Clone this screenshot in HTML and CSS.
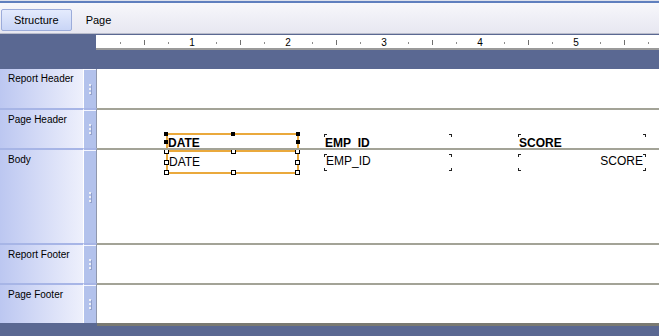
FILE: index.html
```html
<!DOCTYPE html>
<html lang="en">
<head>
    <meta charset="UTF-8">
    <title>Report Designer</title>
    <link rel="stylesheet" href="styles.css">
</head>
<body>
    <div class="topline"></div>

    <div class="tabbar">
        <div class="tab active">Structure</div>
        <div class="tab">Page</div>
    </div>

    <div class="rulerband">
        <div class="ruler">
            <div class="cell"><i class="tick"></i></div>
            <div class="cell"><i class="tick mid"></i></div>
            <div class="cell"><i class="tick"></i></div>
            <div class="cell"><span class="num">1</span></div>
            <div class="cell"><i class="tick"></i></div>
            <div class="cell"><i class="tick mid"></i></div>
            <div class="cell"><i class="tick"></i></div>
            <div class="cell"><span class="num">2</span></div>
            <div class="cell"><i class="tick"></i></div>
            <div class="cell"><i class="tick mid"></i></div>
            <div class="cell"><i class="tick"></i></div>
            <div class="cell"><span class="num">3</span></div>
            <div class="cell"><i class="tick"></i></div>
            <div class="cell"><i class="tick mid"></i></div>
            <div class="cell"><i class="tick"></i></div>
            <div class="cell"><span class="num">4</span></div>
            <div class="cell"><i class="tick"></i></div>
            <div class="cell"><i class="tick mid"></i></div>
            <div class="cell"><i class="tick"></i></div>
            <div class="cell"><span class="num">5</span></div>
            <div class="cell"><i class="tick"></i></div>
            <div class="cell"><i class="tick mid"></i></div>
            <div class="cell"><i class="tick"></i></div>
        </div>
    </div>

    <div class="section first">
        <div class="label">Report Header</div>
        <div class="handle"><span class="grip"></span></div>
        <div class="canvas"></div>
    </div>

    <div class="section">
        <div class="label">Page Header</div>
        <div class="handle"><span class="grip"></span></div>
        <div class="canvas">
            <div class="field selected head-date">
                DATE
                <i class="h solid tl"></i><i class="h solid tm"></i><i class="h solid tr"></i>
                <i class="h solid ml"></i><i class="h solid mr"></i>
            </div>
            <div class="field bracket head-emp">EMP_ID</div>
            <div class="field bracket head-score">SCORE</div>
        </div>
    </div>

    <div class="section body">
        <div class="label">Body</div>
        <div class="handle"><span class="grip"></span></div>
        <div class="canvas">
            <div class="field selected body-date">
                DATE
                <i class="h tl"></i><i class="h tm"></i><i class="h tr"></i>
                <i class="h ml"></i><i class="h mr"></i>
                <i class="h bl"></i><i class="h bm"></i><i class="h br"></i>
            </div>
            <div class="field bracket body-emp">EMP_ID</div>
            <div class="field bracket body-score">SCORE</div>
        </div>
    </div>

    <div class="section">
        <div class="label">Report Footer</div>
        <div class="handle"><span class="grip"></span></div>
        <div class="canvas"></div>
    </div>

    <div class="section">
        <div class="label">Page Footer</div>
        <div class="handle"><span class="grip"></span></div>
        <div class="canvas"></div>
    </div>

    <div class="bottom">
        <div class="bottom-left"></div>
        <div class="bottom-right"></div>
    </div>
</body>
</html>
```

FILE: styles.css
```css
body {
    margin: 0;
    width: 659px;
    height: 336px;
    overflow: hidden;
    font-family: "Liberation Sans", Arial, sans-serif;
    background: #ffffff;
}

/* top toolbar */
.topline {
    height: 2px;
    border-top: 1px solid #dde1ec;
    background: #5f7fbe;
}

.tabbar {
    height: 31px;
    box-sizing: border-box;
    display: flex;
    align-items: flex-end;
    gap: 1px;
    padding: 0 0 2px 1px;
    background: linear-gradient(#f7f7fb, #e7e7f1);
    border-bottom: 1px solid #b9bccb;
}

.tab {
    height: 22px;
    box-sizing: border-box;
    padding: 0 12px;
    font-size: 11px;
    line-height: 21px;
    color: #000;
    border: 1px solid transparent;
}

.tab.active {
    background: linear-gradient(#e4ebfd, #c9d5f6);
    border-color: #9cacda;
    border-radius: 2px;
}

/* ruler */
.rulerband {
    height: 35px;
    box-sizing: border-box;
    padding: 1px 0 0 96px;
    background: #5a6892;
}

.ruler {
    display: flex;
    height: 15px;
    box-sizing: border-box;
    padding: 2px 0 0 12px;
    background: #ffffff;
    border-bottom: 2px solid #9a9a9a;
    overflow: hidden;
}

.cell {
    flex: none;
    width: 24px;
    display: flex;
    justify-content: center;
    align-items: center;
    height: 11px;
}

.tick {
    display: block;
    width: 1px;
    height: 2px;
    background: #8c8c8c;
}

.tick.mid {
    height: 5px;
    background: #707070;
}

.num {
    font-size: 10px;
    line-height: 11px;
    color: #000;
}

/* report sections */
.section {
    display: flex;
    height: 40px;
}

.section.first {
    height: 39px;
}

.section.body {
    height: 95px;
}

.label,
.handle,
.canvas {
    box-sizing: border-box;
    border-top: 2px solid #a7b5e6;
}

.section.first .label,
.section.first .handle,
.section.first .canvas {
    border-top: none;
}

.label {
    width: 83px;
    padding: 4px 0 0 8px;
    font-size: 10px;
    line-height: 12px;
    color: #000;
    background: linear-gradient(to right, #bcc7f1, #eef0fc);
}

.handle {
    width: 14px;
    display: flex;
    align-items: center;
    justify-content: center;
    background: #b3c2ec;
    border-left: 1px solid #ffffff;
    border-right: 1px solid #8f97ad;
    box-shadow: inset 0 1px 0 #f4f6ff;
}

.grip {
    width: 2px;
    height: 10px;
    background: repeating-linear-gradient(to bottom, #eef0f6 0 2px, transparent 2px 4px);
    box-shadow: 1px 1px 0 rgba(90, 100, 140, 0.35);
}

.canvas {
    flex: 1;
    position: relative;
    overflow: hidden;
    background: #ffffff;
    border-top-color: #a3a397;
}

/* report fields */
.field {
    position: absolute;
    box-sizing: border-box;
    font-size: 12px;
    line-height: 14px;
    color: #000;
    white-space: nowrap;
}

.field.bracket {
    width: 128px;
    background:
        linear-gradient(#222, #222) left top / 1px 3px no-repeat,
        linear-gradient(#222, #222) left top / 3px 1px no-repeat,
        linear-gradient(#222, #222) right top / 1px 3px no-repeat,
        linear-gradient(#222, #222) right top / 3px 1px no-repeat,
        linear-gradient(#222, #222) left bottom / 1px 3px no-repeat,
        linear-gradient(#222, #222) left bottom / 3px 1px no-repeat,
        linear-gradient(#222, #222) right bottom / 1px 3px no-repeat,
        linear-gradient(#222, #222) right bottom / 3px 1px no-repeat;
}

.field.selected {
    left: 69px;
    width: 133px;
    border: 2px solid #eaa93c;
}

.head-date,
.head-emp,
.head-score {
    font-weight: bold;
}

.head-date {
    top: 23px;
    height: 22px;
    padding-top: 1px;
}

.head-emp {
    left: 227px;
    top: 24px;
    height: 17px;
    padding: 2px 0 0 1px;
}

.head-score {
    left: 421px;
    top: 24px;
    height: 17px;
    padding: 2px 0 0 1px;
}

.body-date {
    top: 0;
    height: 24px;
    padding: 3px 0 0 1px;
    border-top-width: 3px;
}

.body-emp {
    left: 227px;
    top: 4px;
    height: 17px;
    padding-left: 2px;
}

.body-score {
    left: 421px;
    top: 4px;
    height: 17px;
    padding-right: 3px;
    text-align: right;
}

/* selection handles */
.h {
    position: absolute;
    box-sizing: border-box;
    width: 5px;
    height: 5px;
    background: #ffffff;
    border: 1px solid #000;
}

.h.solid {
    width: 4px;
    height: 4px;
    background: #000;
}

.h.tl { left: -4px; top: -3px; }
.h.tm { left: calc(50% - 2px); top: -3px; }
.h.tr { right: -3px; top: -3px; }
.h.ml { left: -4px; top: 8px; }
.h.mr { right: -3px; top: 8px; }
.h.bl { left: -4px; bottom: -3px; }
.h.bm { left: calc(50% - 2px); bottom: -3px; }
.h.br { right: -3px; bottom: -3px; }

.h.solid.ml,
.h.solid.mr {
    top: 5px;
}

/* bottom strip */
.bottom {
    display: flex;
    height: 13px;
    background: #5a6892;
}

.bottom-left {
    width: 97px;
}

.bottom-right {
    flex: 1;
    border-top: 3px solid #7a7a72;
}
```
